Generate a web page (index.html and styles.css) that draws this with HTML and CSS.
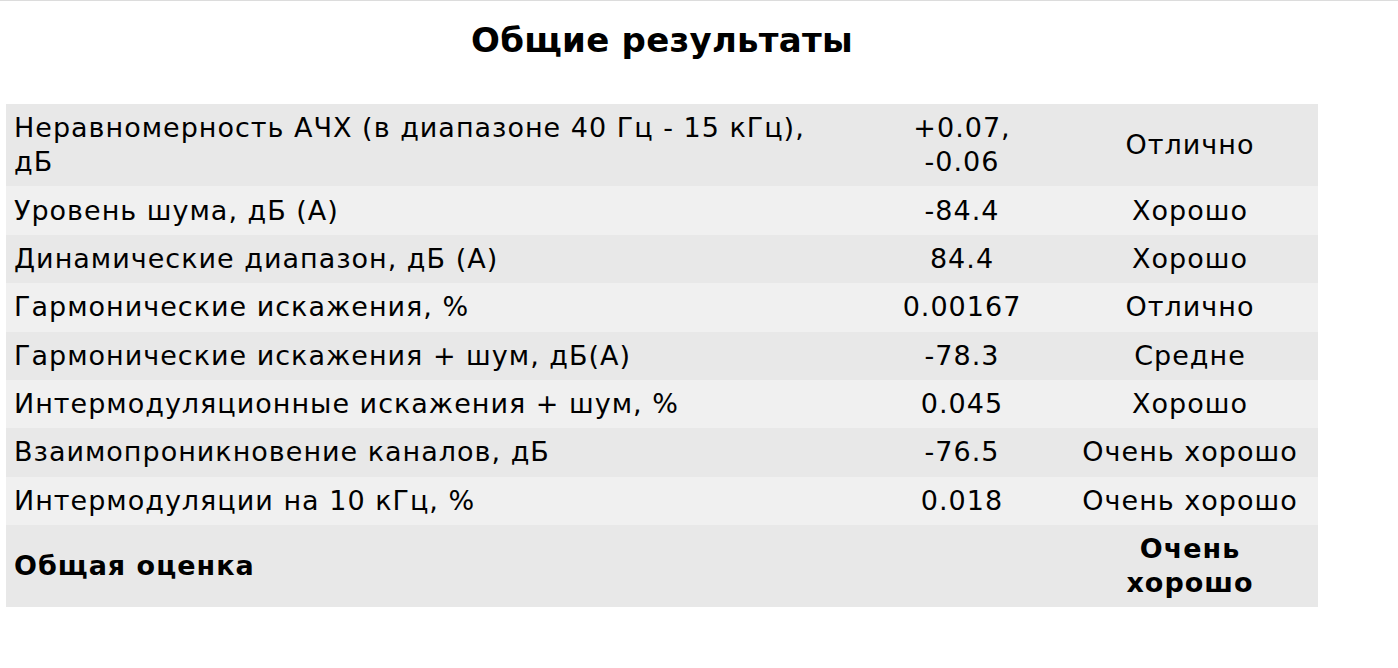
FILE: index.html
```html
<!DOCTYPE html>
<html lang="ru">
<head>
<meta charset="utf-8">
<title>Общие результаты</title>
<link rel="stylesheet" href="styles.css">
</head>
<body>
<div class="page">
  <h2 class="title">Общие результаты</h2>
  <table class="results">
    <colgroup>
      <col class="c-name">
      <col class="c-value">
      <col class="c-grade">
    </colgroup>
    <tbody>
      <tr><td class="name">Неравномерность АЧХ (в диапазоне 40 Гц - 15 кГц), дБ</td><td class="value">+0.07, -0.06</td><td class="grade">Отлично</td></tr>
      <tr><td class="name">Уровень шума, дБ (А)</td><td class="value">-84.4</td><td class="grade">Хорошо</td></tr>
      <tr><td class="name">Динамические диапазон, дБ (А)</td><td class="value">84.4</td><td class="grade">Хорошо</td></tr>
      <tr><td class="name">Гармонические искажения, %</td><td class="value">0.00167</td><td class="grade">Отлично</td></tr>
      <tr><td class="name">Гармонические искажения + шум, дБ(А)</td><td class="value">-78.3</td><td class="grade">Средне</td></tr>
      <tr><td class="name">Интермодуляционные искажения + шум, %</td><td class="value">0.045</td><td class="grade">Хорошо</td></tr>
      <tr><td class="name">Взаимопроникновение каналов, дБ</td><td class="value">-76.5</td><td class="grade">Очень хорошо</td></tr>
      <tr><td class="name">Интермодуляции на 10 кГц, %</td><td class="value">0.018</td><td class="grade">Очень хорошо</td></tr>
      <tr class="total"><td class="name">Общая оценка</td><td class="value"></td><td class="grade">Очень хорошо</td></tr>
    </tbody>
  </table>
</div>
</body>
</html>
```

FILE: styles.css
```css
html, body {
  margin: 0;
  padding: 0;
  background: #ffffff;
}

body {
  border-top: 1px solid #dcdcdc;
  font-family: "DejaVu Sans", Verdana, sans-serif;
  color: #000;
}

.page {
  width: 1312px;
  margin-left: 6px;
}

.title {
  margin: 0;
  padding-top: 19px;
  height: 103px;
  box-sizing: border-box;
  text-align: center;
  font-size: 34px;
  line-height: 40px;
  letter-spacing: 0.25px;
  font-weight: bold;
}

.results {
  width: 1312px;
  border-collapse: collapse;
  table-layout: fixed;
  font-size: 27px;
  line-height: 34px;
  letter-spacing: 1px;
}

.c-name { width: 856px; }
.c-value { width: 200px; }
.c-grade { width: 256px; }

.results td {
  padding: 7.2px 8px;
  vertical-align: middle;
}

.results td.name { padding-right: 20px; }
.results td.value { padding-left: 14px; padding-right: 14px; text-align: center; }
.results td.grade { padding-left: 14px; padding-right: 14px; text-align: center; }

.results tr:nth-child(odd) { background: #e8e8e8; }
.results tr:nth-child(even) { background: #f0f0f0; }

.total td { font-weight: bold; }
```
